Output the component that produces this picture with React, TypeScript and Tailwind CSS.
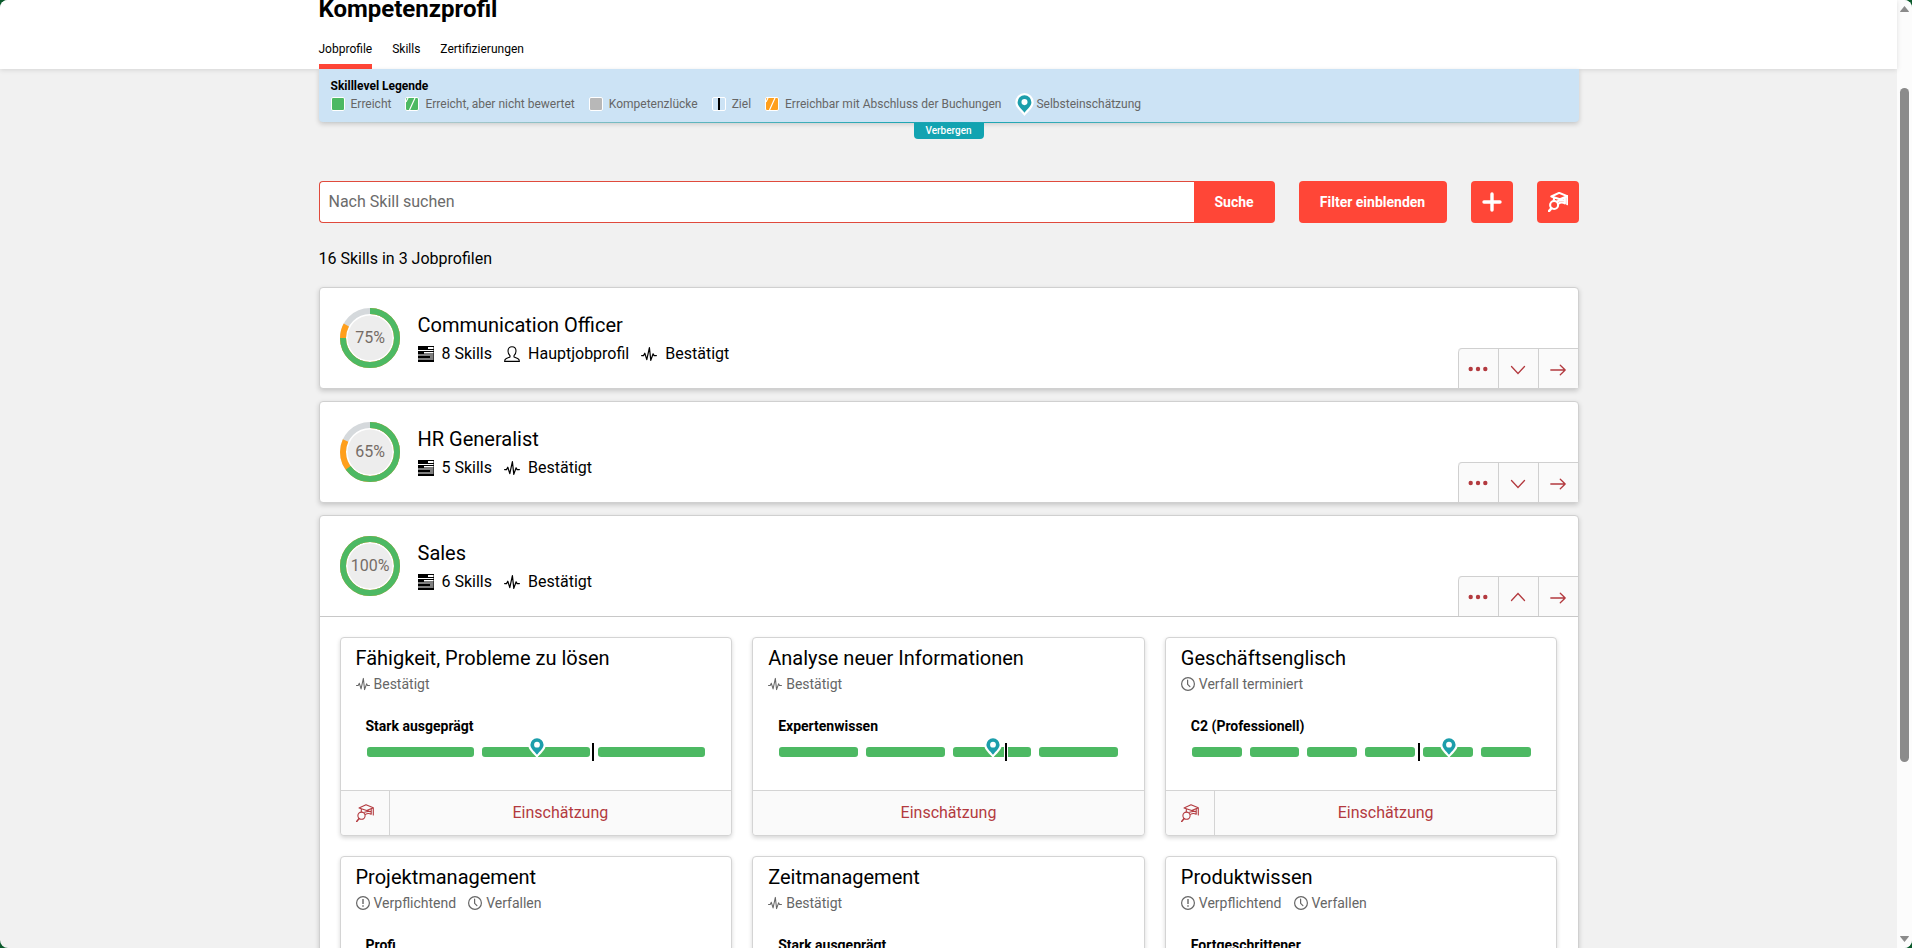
import type { ReactNode } from "react";

type IconProps = { className?: string };

function PulseIcon({ className }: IconProps) {
  return (
    <svg viewBox="0 0 16 16" className={className} fill="none" stroke="currentColor" strokeWidth="1.2" strokeLinejoin="round" strokeLinecap="round" aria-hidden="true">
      <path d="M.6 9.6h1.9l1.3-2.4 2 6.4L8.4 1.6l1.4 12.8 2.3-6.6 1 1.8h2.3" />
    </svg>
  );
}

function PersonIcon({ className }: IconProps) {
  return (
    <svg viewBox="0 0 16 16" className={className} fill="none" stroke="currentColor" strokeWidth="1.1" strokeLinejoin="round" aria-hidden="true">
      <path d="M6 9.7C4.7 8.6 4 7 4 5 4 2.300 5.700.7 8 .7S12 2.300 12 5c0 2-.7 3.600-2 4.700v1.300l3.700 1.500c1.100.5 1.700 1.400 1.700 2.900H.6c0-1.500.6-2.400 1.700-2.900L6 11z" />
    </svg>
  );
}

function SkillsIcon({ className }: IconProps) {
  return (
    <svg viewBox="0 0 16 16" className={className} fill="currentColor" aria-hidden="true">
      <path d="M0 0h16v1H0zM0 1h10v2H0zM0 3h16v1H0zM0 5h16v1H0zM0 6h6v1.500H0zM0 7.500h16v1H0zM0 9.500h16v1H0zM0 10.500h12v1H0zM0 11.500h16v1H0zM0 13.500h16V16H0z" />
      <path d="M15.500 0h.5v16h-.5z" />
    </svg>
  );
}

function ClockIcon({ className }: IconProps) {
  return (
    <svg viewBox="0 0 14 14" className={className} fill="none" stroke="currentColor" strokeWidth="1.2" strokeLinecap="round" aria-hidden="true">
      <circle cx="7" cy="7" r="6.400" />
      <path d="M6.600 3.200v4.100l2.300 2.300" />
    </svg>
  );
}

function AlertIcon({ className }: IconProps) {
  return (
    <svg viewBox="0 0 14 14" className={className} fill="none" stroke="currentColor" strokeWidth="1.2" aria-hidden="true">
      <circle cx="7" cy="7" r="6.400" />
      <path d="M7 3v5M7 9.300v1.500" strokeWidth="1.400" />
    </svg>
  );
}

function TrainingIcon({ className, weight = 1.1 }: IconProps & { weight?: number }) {
  return (
    <svg viewBox="0 0 18 18" className={className} fill="none" stroke="currentColor" strokeWidth={weight} strokeLinejoin="round" strokeLinecap="round" aria-hidden="true">
      <path d="M3 4 10 .8l7.300 2.900L10.700 6.500zM5.300 5.200v2.600M15.200 4.700v5.600c-1.900-1.100-3.900-1.100-5.700.1M10.700 6.500l4.500 1.300M8.600 8.300c2-.9 4.400-1 6.600-.5M17.300 3.700v7.300" />
      <circle cx="5.500" cy="11.700" r="3.600" />
      <path d="M3.100 14.600.7 17.400" strokeWidth={weight + 0.4} />
    </svg>
  );
}

function PinIcon({ className }: IconProps) {
  return (
    <svg viewBox="0 0 18 22" className={className} aria-hidden="true">
      <path d="M9 0a8.800 8.800 0 0 0-8.800 8.800C.2 14 5.500 17.500 9 22c3.500-4.500 8.800-8 8.800-13.200A8.800 8.800 0 0 0 9 0z" fill="#fff" />
      <path d="M9 2.200a6.600 6.600 0 0 0-6.600 6.600C2.400 12.500 6.200 15 9 18.800c2.800-3.800 6.600-6.300 6.600-10A6.600 6.600 0 0 0 9 2.200z" fill="#1c9eab" />
      <circle cx="9" cy="8.700" r="2.900" fill="#fff" />
    </svg>
  );
}

function DotsIcon() {
  return (
    <svg viewBox="0 0 20 6" className="h-1.5 w-5" fill="currentColor" aria-hidden="true">
      <circle cx="2.700" cy="3" r="2.200" />
      <circle cx="10" cy="3" r="2.200" />
      <circle cx="17.300" cy="3" r="2.200" />
    </svg>
  );
}

function ChevronIcon({ up }: { up: boolean }) {
  return (
    <svg viewBox="0 0 16 16" className="size-4" fill="none" stroke="currentColor" strokeWidth="1.300" strokeLinecap="round" aria-hidden="true">
      <path d={up ? "M1.500 11.500 8 4.500l6.500 7" : "M1.500 5.500l6.500 7 6.500-7"} />
    </svg>
  );
}

function ArrowIcon() {
  return (
    <svg viewBox="0 0 16 16" className="size-4" fill="none" stroke="currentColor" strokeWidth="1.300" strokeLinecap="round" strokeLinejoin="round" aria-hidden="true">
      <path d="M.8 9h14.400M10.300 4.200 15.200 9l-4.900 4.700" />
    </svg>
  );
}

function Ring({ value, planned }: { value: number; planned: number }) {
  return (
    <svg viewBox="0 0 60 60" className="size-15" role="img" aria-label={`${value}%`}>
      <g fill="none" strokeWidth="6" transform="rotate(-90 30 30)">
        <circle cx="30" cy="30" r="27" stroke="#d5d9dc" />
        <circle cx="30" cy="30" r="27" stroke="#ff9f1c" pathLength="100" strokeDasharray={`${value + planned} 100`} />
        <circle cx="30" cy="30" r="27" stroke="#4db963" pathLength="100" strokeDasharray={`${value} 100`} />
      </g>
      <circle cx="30" cy="30" r="22.500" fill="#ededed" />
      <text x="30" y="35" textAnchor="middle" fontSize="16" fill="#756c66">
        {value}%
      </text>
    </svg>
  );
}

const swatch = "size-3.5 rounded-xs border border-white";

function Slash() {
  return (
    <svg viewBox="0 0 12 12" className="size-3" aria-hidden="true">
      <path d="M3.500 12 9 0M0 4 2 0" stroke="#fff" strokeWidth="1.200" />
    </svg>
  );
}

const legend: { label: string; mark: ReactNode }[] = [
  { label: "Erreicht", mark: <span className={`${swatch} bg-[#4db963]`} /> },
  { label: "Erreicht, aber nicht bewertet", mark: <span className={`${swatch} bg-[#4db963]`}><Slash /></span> },
  { label: "Kompetenzlücke", mark: <span className={`${swatch} bg-[#b8b8b8]`} /> },
  { label: "Ziel", mark: <span className={`${swatch} flex justify-center`}><span className="h-full w-0.5 bg-black" /></span> },
  { label: "Erreichbar mit Abschluss der Buchungen", mark: <span className={`${swatch} bg-[#ff9f1c]`}><Slash /></span> },
];

type Tag = { kind: "pulse" | "clock" | "alert"; label: string };

type Skill = {
  name: string;
  tags: Tag[];
  level: string;
  steps: number;
  pin: number;
  training: boolean;
};

const skills: Skill[] = [
  { name: "Fähigkeit, Probleme zu lösen", tags: [{ kind: "pulse", label: "Bestätigt" }], level: "Stark ausgeprägt", steps: 3, pin: 50.3, training: true },
  { name: "Analyse neuer Informationen", tags: [{ kind: "pulse", label: "Bestätigt" }], level: "Expertenwissen", steps: 4, pin: 63.1, training: false },
  { name: "Geschäftsenglisch", tags: [{ kind: "clock", label: "Verfall terminiert" }], level: "C2 (Professionell)", steps: 6, pin: 76, training: true },
  { name: "Projektmanagement", tags: [{ kind: "alert", label: "Verpflichtend" }, { kind: "clock", label: "Verfallen" }], level: "Profi", steps: 4, pin: 50, training: true },
  { name: "Zeitmanagement", tags: [{ kind: "pulse", label: "Bestätigt" }], level: "Stark ausgeprägt", steps: 3, pin: 50, training: false },
  { name: "Produktwissen", tags: [{ kind: "alert", label: "Verpflichtend" }, { kind: "clock", label: "Verfallen" }], level: "Fortgeschrittener", steps: 4, pin: 50, training: true },
];

function TagIcon({ kind }: { kind: Tag["kind"] }) {
  if (kind === "pulse") return <PulseIcon className="size-3.5" />;
  if (kind === "clock") return <ClockIcon className="size-3.5" />;
  return <AlertIcon className="size-3.5" />;
}

function SkillCard({ skill }: { skill: Skill }) {
  return (
    <article className="flex flex-col rounded border border-[#d4d4d4] bg-white shadow-[0_2px_4px_rgba(0,0,0,0.16)]">
      <div className="px-[15px] pt-2">
        <h3 className="text-xl leading-6">{skill.name}</h3>
        <ul className="mt-1 flex gap-3 text-sm leading-5 text-[#666]">
          {skill.tags.map((tag) => (
            <li key={tag.label} className="flex items-center gap-1">
              <TagIcon kind={tag.kind} />
              {tag.label}
            </li>
          ))}
        </ul>
      </div>
      <div className="px-[25px] pt-6 pb-[33px]">
        <p className="text-sm leading-4 font-bold">{skill.level}</p>
        <div className="relative mx-px mt-[13px] flex h-2.5 gap-2">
          {Array.from({ length: skill.steps }, (_, i) => (
            <span key={i} className="flex-1 rounded-[3px] bg-[#4db963]" />
          ))}
          <span className="absolute -top-1 left-[67%] h-[18px] w-1 -translate-x-1/2 border-x border-white bg-black" />
          <span className="absolute -top-[11px] -translate-x-1/2" style={{ left: `${skill.pin}%` }}>
            <PinIcon className="h-[22px] w-[18px]" />
          </span>
        </div>
      </div>
      <div className="flex h-[45px] rounded-b border-t border-[#d4d4d4] bg-[#fafafa] text-[#b33a3f]">
        {skill.training && (
          <button type="button" aria-label="Weiterbildungen" className="flex w-[49px] items-center justify-center border-r border-[#d4d4d4]">
            <TrainingIcon className="size-[18px]" />
          </button>
        )}
        <button type="button" className="flex-1 text-base">
          Einschätzung
        </button>
      </div>
    </article>
  );
}

type Profile = { name: string; value: number; planned: number; count: number; main: boolean; open: boolean };

const profiles: Profile[] = [
  { name: "Communication Officer", value: 75, planned: 8, count: 8, main: true, open: false },
  { name: "HR Generalist", value: 65, planned: 17, count: 5, main: false, open: false },
  { name: "Sales", value: 100, planned: 0, count: 6, main: false, open: true },
];

function ProfileCard({ profile }: { profile: Profile }) {
  const action = "flex h-[39px] w-10 items-center justify-center border-l border-[#d0d0d0]";
  return (
    <section className="rounded border border-[#d0d0d0] bg-white shadow-[0_2px_5px_rgba(0,0,0,0.18)]">
      <div className="flex h-[100px] items-start justify-between">
        <div className="flex gap-[18px] pt-5 pl-5">
          <Ring value={profile.value} planned={profile.planned} />
          <div className="pt-1">
            <h2 className="text-xl leading-[26px]">{profile.name}</h2>
            <ul className="flex gap-3 text-base leading-8">
              <li className="flex items-center gap-2">
                <SkillsIcon className="size-4" />
                {profile.count} Skills
              </li>
              {profile.main && (
                <li className="flex items-center gap-2">
                  <PersonIcon className="size-4" />
                  Hauptjobprofil
                </li>
              )}
              <li className="flex items-center gap-2">
                <PulseIcon className="size-4" />
                Bestätigt
              </li>
            </ul>
          </div>
        </div>
        <div className="flex self-end overflow-hidden rounded-tl border-t border-[#d0d0d0] bg-[#fafafa] text-[#b33a3f]">
          <button type="button" aria-label="Mehr" className={`${action} rounded-tl`}>
            <DotsIcon />
          </button>
          <button type="button" aria-label={profile.open ? "Einklappen" : "Ausklappen"} className={action}>
            <ChevronIcon up={profile.open} />
          </button>
          <button type="button" aria-label="Öffnen" className={action}>
            <ArrowIcon />
          </button>
        </div>
      </div>
      {profile.open && (
        <div className="grid grid-cols-3 gap-5 border-t border-[#c8c8c8] p-5">
          {skills.map((skill) => (
            <SkillCard key={skill.name} skill={skill} />
          ))}
        </div>
      )}
    </section>
  );
}

const tabs = ["Jobprofile", "Skills", "Zertifizierungen"];

export default function App() {
  return (
    <div className="h-screen overflow-hidden bg-[#0b5a2c] font-[Roboto,sans-serif] text-black">
      <div className="flex h-full overflow-hidden rounded-lg bg-[#f1f1f1]">
        <div className="min-w-0 flex-1">
          <header className="relative bg-white shadow-[0_1px_5px_rgba(0,0,0,0.12)]">
            <div className="mx-auto max-w-[1260px]">
              <h1 className="text-2xl leading-[18px] font-bold">Kompetenzprofil</h1>
              <nav className="mt-[22px] flex gap-5 text-xs leading-[18px]">
                {tabs.map((tab, i) => (
                  <a key={tab} href="#" className={i === 0 ? "border-b-5 border-[#ff4637] pb-1.5" : "pb-1.5"}>
                    {tab}
                  </a>
                ))}
              </nav>
            </div>
          </header>
          <main className="mx-auto max-w-[1260px]">
            <div className="relative">
              <div className="h-[53px] rounded-b bg-[#cce3f5] px-3 pt-2 shadow-[0_2px_5px_rgba(0,0,0,0.18)]">
                <h2 className="text-xs leading-[18px] font-bold">Skilllevel Legende</h2>
                <ul className="flex gap-3.5 text-xs leading-[18px] text-[#666]">
                  {legend.map((item) => (
                    <li key={item.label} className="flex items-center gap-1.5">
                      {item.mark}
                      {item.label}
                    </li>
                  ))}
                  <li className="flex items-center gap-0.5">
                    <PinIcon className="-my-1 h-[23px] w-[19px]" />
                    Selbsteinschätzung
                  </li>
                </ul>
              </div>
              <div className="h-px bg-linear-to-r from-transparent via-[#12a3b1] to-transparent" />
              <button type="button" className="mx-auto block h-4 w-[70px] rounded-b bg-[#12a3b1] text-[10px] leading-4 font-medium text-white">
                Verbergen
              </button>
            </div>
            <div className="mt-[42px] flex gap-6">
              <form className="flex h-[42px] flex-1">
                <input type="search" aria-label="Nach Skill suchen" placeholder="Nach Skill suchen" className="min-w-0 flex-1 rounded-l-sm border border-r-0 border-[#e04a3c] bg-white px-[9px] text-base outline-none placeholder:text-[#6b6b6b]" />
                <button type="button" className="w-[81px] rounded-r bg-[#ff4637] text-sm font-bold text-white">
                  Suche
                </button>
              </form>
              <button type="button" className="h-[42px] w-[148px] rounded bg-[#ff4637] text-sm font-bold text-white">
                Filter einblenden
              </button>
              <button type="button" aria-label="Hinzufügen" className="flex size-[42px] items-center justify-center rounded bg-[#ff4637] text-white">
                <svg viewBox="0 0 20 20" className="size-5" stroke="currentColor" strokeWidth="3.400" strokeLinecap="round" aria-hidden="true">
                  <path d="M10 2v16M2 10h16" />
                </svg>
              </button>
              <button type="button" aria-label="Weiterbildungen suchen" className="flex size-[42px] items-center justify-center rounded bg-[#ff4637] text-white">
                <TrainingIcon className="size-5" weight={1.9} />
              </button>
            </div>
            <p className="mt-6 text-base leading-6">16 Skills in 3 Jobprofilen</p>
            <div className="mt-4 flex flex-col gap-3">
              {profiles.map((profile) => (
                <ProfileCard key={profile.name} profile={profile} />
              ))}
            </div>
          </main>
        </div>
        <div className="flex w-[15px] flex-col items-center bg-[#fcfcfc] py-1.5" aria-hidden="true">
          <svg viewBox="0 0 9 6" className="h-1.5 w-[9px]" fill="#8b8b8b">
            <path d="M4.500 0 9 5.500c0 .3-.2.500-.5.500h-8C.2 6 0 5.800 0 5.500z" />
          </svg>
          <div className="mt-[76px] h-[72%] w-[9px] rounded-full bg-[#8b8b8b]" />
          <svg viewBox="0 0 9 6" className="mt-auto h-1.5 w-[9px]" fill="#8b8b8b">
            <path d="M4.500 6 9 .5C9 .2 8.800 0 8.500 0h-8C.2 0 0 .2 0 .5z" />
          </svg>
        </div>
      </div>
    </div>
  );
}
